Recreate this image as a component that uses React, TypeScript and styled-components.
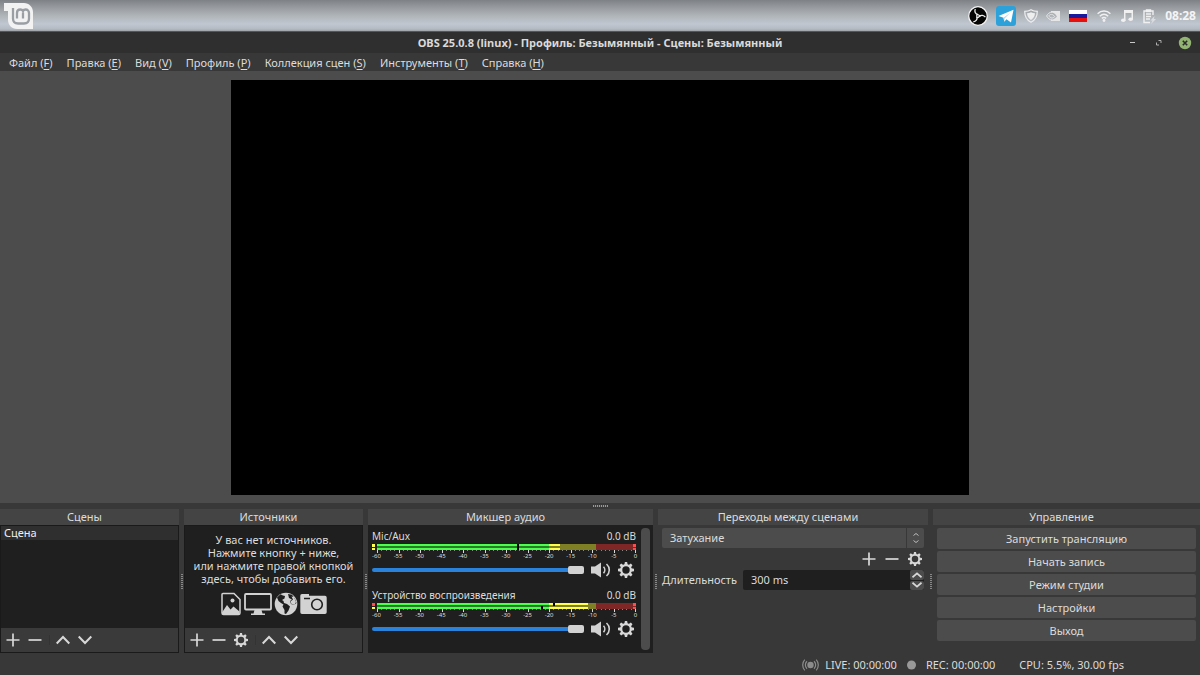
import React from "react";
import styled, { createGlobalStyle } from "styled-components";

const GlobalStyle = createGlobalStyle`
  * { box-sizing: border-box; }
  body { margin: 0; background: #383838; }
  body, button, input, select {
    font-family: "Noto Sans", sans-serif;
    font-size: 11px;
    line-height: 16px;
    color: #dcdcdc;
  }
  button, input, select { margin: 0; padding: 0; border: 0; background: none; }
`;

const Desktop = styled.div`
  display: flex;
  flex-direction: column;
  height: 100vh;
  min-height: 420px;
`;

const Panel = styled.header`
  display: flex;
  align-items: center;
  justify-content: space-between;
  flex: none;
  height: 32px;
  padding: 0 4px;
  background: linear-gradient(#7e8286 0, #999da1 8px, #b0b5ba 16px, #c1c7d0 24px, #b4bac2 29px, #9ea3a9 31px, #55585b 31px);
`;

const PanelButton = styled.button`
  display: flex;
`;

const Tray = styled.div`
  display: flex;
  align-items: center;
  gap: 9px;
`;

const TrayGroup = styled.div<{ $gap: number }>`
  display: flex;
  align-items: center;
  gap: ${(p) => p.$gap}px;
`;

const TrayIcon = styled.svg<{ $w: number; $h: number }>`
  display: block;
  flex: none;
  width: ${(p) => p.$w}px;
  height: ${(p) => p.$h}px;
`;

const Clock = styled.time`
  font-size: 12px;
  font-weight: 700;
  color: #f4f4f4;
`;

const TitleBar = styled.div`
  display: grid;
  grid-template-columns: 1fr auto 1fr;
  align-items: center;
  flex: none;
  height: 21px;
  padding: 0 8px;
  background: #2f2f2f;
`;

const Title = styled.h1`
  grid-column: 2;
  margin: 0;
  font-size: 11px;
  line-height: 16px;
  font-weight: 700;
  color: #dadada;
`;

const WindowButtons = styled.div`
  display: flex;
  justify-content: flex-end;
  gap: 12px;
`;

const WindowButton = styled.button`
  display: flex;
  width: 14px;
  height: 14px;
`;

const MenuBar = styled.nav`
  display: flex;
  align-items: center;
  gap: 14px;
  flex: none;
  height: 18px;
  padding: 2px 9px 0;
  background: #383838;
`;

const MenuItem = styled.button`
  white-space: nowrap;
  & u { text-underline-offset: 2px; }
`;

const Preview = styled.main`
  display: flex;
  justify-content: center;
  flex: 1;
  min-height: 0;
  padding: 9px 0 8px;
  background: #4c4c4c;
`;

const Canvas = styled.div`
  height: 100%;
  aspect-ratio: 16 / 9;
  background: #000;
`;

const HorizontalSplitter = styled.div`
  display: flex;
  align-items: center;
  justify-content: center;
  flex: none;
  height: 6px;
  &::after {
    content: "";
    width: 15px;
    height: 2px;
    background: repeating-linear-gradient(90deg, #999 0 1px, #444 1px 2px);
  }
`;

const VerticalSplitter = styled.div`
  display: flex;
  align-items: center;
  justify-content: center;
  flex: none;
  width: 5px;
  &::after {
    content: "";
    width: 2px;
    height: 15px;
    background: repeating-linear-gradient(#888 0 1px, #3c3c3c 1px 2px);
  }
`;

const Docks = styled.div`
  display: flex;
  flex: none;
`;

const Dock = styled.section<{ $grow: number }>`
  display: flex;
  flex-direction: column;
  flex: ${(p) => p.$grow} 1 0;
  min-width: 0;
`;

const DockTitle = styled.h2`
  flex: none;
  margin: 0;
  padding-right: 10px;
  font-size: 11px;
  font-weight: 400;
  line-height: 16px;
  text-align: center;
  background: #444;
`;

const ListBox = styled.div`
  display: flex;
  flex-direction: column;
  flex: 1;
  border: 1px solid #1a1a1a;
  background: #1f1f1f;
`;

const ListItem = styled.div`
  padding: 0 3px;
  line-height: 14px;
  color: #f0f0f0;
  background: #2f2f2f;
`;

const Toolbar = styled.div`
  display: flex;
  align-items: center;
  gap: 8px;
  height: 24px;
  margin-top: auto;
  padding: 0 5px;
  background: #3a3a3a;
`;

const ToolButton = styled.button`
  display: flex;
  flex: none;
`;

const Separator = styled.span`
  width: 1px;
  height: 10px;
  margin: 0 -2px 0 -1px;
  background: #333;
`;

const EmptyHint = styled.p`
  margin: 7px 0;
  line-height: 13px;
  text-align: center;
  white-space: nowrap;
`;

const SourceIcons = styled.div`
  display: flex;
  align-items: center;
  justify-content: center;
  gap: 2px;
`;

const Mixer = styled.div`
  display: flex;
  gap: 5px;
  flex: 1;
  min-height: 128px;
  padding: 3px 3px 3px 4px;
  background: #1f1f1f;
`;

const Channels = styled.div`
  display: flex;
  flex-direction: column;
  gap: 7px;
  flex: 1;
  min-width: 0;
`;

const ScrollThumb = styled.div`
  width: 9px;
  border-radius: 4px;
  background: #4c4c4c;
`;

const ChannelHead = styled.div`
  display: flex;
  justify-content: space-between;
  font-size: 10px;
`;

const MeterDrawing = styled.svg`
  display: block;
  width: 100%;
  height: 9px;
`;

const Scale = styled.div`
  display: flex;
  justify-content: space-between;
  margin-right: -4px;
  height: 7px;
  font-size: 6px;
  line-height: 6px;
  & span { width: 9px; text-align: center; white-space: nowrap; }
`;

const ChannelControls = styled.div`
  display: flex;
  align-items: center;
  gap: 7px;
  height: 20px;
  padding-right: 2px;
`;

const Fader = styled.input`
  appearance: none;
  flex: 1;
  min-width: 0;
  height: 8px;
  &::-webkit-slider-runnable-track {
    height: 4px;
    border-radius: 2px;
    background: #2a82da;
  }
  &::-webkit-slider-thumb {
    appearance: none;
    width: 16px;
    height: 8px;
    margin-top: -2px;
    border-radius: 2px;
    background: #d2d2d2;
  }
`;

const Transitions = styled.div`
  display: flex;
  flex-direction: column;
  padding: 3px 4px;
`;

const SelectFrame = styled.div`
  display: grid;
  grid-template-columns: 1fr 18px;
  align-items: center;
  height: 20px;
  border-radius: 2px;
  background: #4c4c4c;
`;

const TransitionSelect = styled.select`
  grid-area: 1 / 1 / 2 / 3;
  appearance: none;
  width: 100%;
  height: 20px;
  padding: 0 8px;
`;

const SelectArrows = styled.span`
  grid-area: 1 / 2;
  display: flex;
  align-items: center;
  justify-content: center;
  height: 20px;
  border-left: 1px solid #383838;
  pointer-events: none;
`;

const TransitionTools = styled.div`
  display: flex;
  align-items: center;
  justify-content: flex-end;
  gap: 9px;
  height: 22px;
  padding: 0 2px;
`;

const DurationRow = styled.div`
  display: flex;
  align-items: center;
  gap: 6px;
`;

const SpinBox = styled.div`
  display: flex;
  flex: 1;
  min-width: 0;
  height: 20px;
  border-radius: 2px;
  overflow: hidden;
  background: #1f1f1f;
`;

const DurationInput = styled.input`
  flex: 1;
  min-width: 0;
  padding: 0 8px;
`;

const SpinButtons = styled.div`
  display: flex;
  flex-direction: column;
  gap: 1px;
  width: 14px;
`;

const SpinButton = styled.button`
  display: flex;
  align-items: center;
  justify-content: center;
  flex: 1;
  border-radius: 2px;
  background: #4c4c4c;
`;

const Controls = styled.div`
  display: flex;
  flex-direction: column;
  gap: 2px;
  padding: 3px 4px;
`;

const ControlButton = styled.button`
  height: 21px;
  border-radius: 2px;
  background: #4c4c4c;
`;

const StatusBar = styled.footer`
  display: flex;
  align-items: center;
  justify-content: flex-end;
  gap: 24px;
  flex: none;
  height: 22px;
  padding: 2px 76px 0 0;
`;

const StatusGroup = styled.div`
  display: flex;
  gap: 10px;
`;

const Status = styled.span<{ $gap: number }>`
  display: flex;
  align-items: center;
  gap: ${(p) => p.$gap}px;
  white-space: nowrap;
`;

const line = { fill: "none", stroke: "#d8d8d8", strokeWidth: 1.7 };

const Plus = () => (
  <svg width="14" height="14" viewBox="0 0 14 14" {...line}><path d="M7 .5v13M.5 7h13" /></svg>
);
const Minus = () => (
  <svg width="14" height="14" viewBox="0 0 14 14" {...line}><path d="M.5 7h13" /></svg>
);
const Up = () => (
  <svg width="14" height="14" viewBox="0 0 14 14" {...line} strokeWidth={2}><path d="M.7 10.500 7 4l6.300 6.500" /></svg>
);
const Down = () => (
  <svg width="14" height="14" viewBox="0 0 14 14" {...line} strokeWidth={2}><path d="M.7 3.500 7 10l6.300-6.500" /></svg>
);
const Gear = ({ size = 14 }: { size?: number }) => (
  <svg width={size} height={size} viewBox="0 0 14 14" fill="none" stroke="#d8d8d8">
    <circle cx="7" cy="7" r="4.200" strokeWidth="1.900" />
    {[0, 45, 90, 135, 180, 225, 270, 315].map((a) => (
      <path key={a} d="M5.500 2.600 6 0h2l.5 2.600z" fill="#d8d8d8" stroke="none" transform={`rotate(${a} 7 7)`} />
    ))}
  </svg>
);
const Speaker = () => (
  <svg width="20" height="16" viewBox="0 0 20 16" fill="none" stroke="#d2d2d2" strokeWidth="1.600">
    <path d="M0 4.500h4l6-4v15l-6-4H0z" fill="#d2d2d2" stroke="none" />
    <path d="M12.500 4.800c1.700 1.800 1.700 4.600 0 6.400M15.500 2c3.700 3.300 3.700 8.700 0 12" />
  </svg>
);

type MeterProps = { level: number; peaks: [number, number]; clip: [string, string] };

const Meter = ({ level, peaks, clip }: MeterProps) => (
  <MeterDrawing viewBox="0 0 264 9" preserveAspectRatio="none" shapeRendering="crispEdges" aria-hidden="true">
    <rect x="5" width="172" height="6" fill="#267f26" />
    <rect x="177" width="47" height="6" fill="#7f7f26" />
    <rect x="224" width="40" height="6" fill="#7f2626" />
    {[0, 4].map((y, i) => (
      <g key={y}>
        <rect y={y} width="3" height={3 - i} fill={clip[i]} />
        <rect x="5" y={y} width="172" height="2" fill="#4cff4c" />
        <rect x="177" y={y} width={level - 177} height="2" fill="#ffff4c" />
        <rect x={peaks[i]} y={i * 3} width="2" height="3" fill="#000" />
        <rect x="261" y={y} width="3" height={3 - i} fill="#ff4c4c" />
      </g>
    ))}
    {Array.from({ length: 61 }, (_, i) => (
      <rect key={i} x={Math.round(5 + i * 4.3)} y="6" width="1" height={i % 5 ? 1 : 3} fill={i % 5 ? "#888" : "#d8d8d8"} />
    ))}
  </MeterDrawing>
);

const Channel = ({ name, ...meter }: MeterProps & { name: string }) => (
  <div>
    <ChannelHead><span>{name}</span><span>0.0 dB</span></ChannelHead>
    <Meter {...meter} />
    <Scale>
      {[-60, -55, -50, -45, -40, -35, -30, -25, -20, -15, -10, -5, 0].map((v) => <span key={v}>{v}</span>)}
    </Scale>
    <ChannelControls>
      <Fader type="range" min="0" max="100" defaultValue="100" aria-label={name} />
      <ToolButton aria-label="Без звука"><Speaker /></ToolButton>
      <ToolButton aria-label="Параметры"><Gear size={16} /></ToolButton>
    </ChannelControls>
  </div>
);

const menus = [["Файл", "F"], ["Правка", "E"], ["Вид", "V"], ["Профиль", "P"], ["Коллекция сцен", "S"], ["Инструменты", "T"], ["Справка", "H"]];
const controls = ["Запустить трансляцию", "Начать запись", "Режим студии", "Настройки", "Выход"];

export default function App() {
  return (
    <Desktop>
      <GlobalStyle />
      <Panel>
        <PanelButton aria-label="Меню">
          <svg width="29" height="26" viewBox="0 0 29 26">
            <path d="M0 0h20c5 0 9 4 9 9v17H13c-5 0-9-4-9-9V8H0z" fill="#f2f2f2" />
            <path d="M9 5v10.500c0 3 2 5 5 5h6c3 0 5-2 5-5V10c0-2-1.500-3.500-3.300-3.500-1.400 0-2.400.8-2.700 1.500-.5-.9-1.500-1.500-2.700-1.500-1.900 0-3.300 1.500-3.300 3.500v5.500M19 9.500v6" fill="none" stroke="#9a9fa5" strokeWidth="2.300" />
          </svg>
        </PanelButton>
        <Tray>
          <TrayGroup $gap={8}>
            <TrayIcon $w={20} $h={20} viewBox="0 0 20 20">
              <circle cx="10" cy="10" r="9.300" fill="#050505" stroke="#f4f4f4" strokeWidth="1.300" />
              {[0, 120, 240].map((a) => (
                <path key={a} d="M7.300 3C6.300 5.500 7.200 8 9.800 8.600c1.200.3 2 .9 2.300 2" fill="none" stroke="#eee" strokeWidth="1.300" transform={`rotate(${a} 10 10)`} />
              ))}
            </TrayIcon>
            <TrayIcon $w={20} $h={20} viewBox="0 0 20 20">
              <rect width="20" height="20" rx="3" fill="#2da1da" />
              <path d="M2.500 10 17.500 3.800 15 16.500l-4.500-3.200-2.200 2.500-.8-4z" fill="#fff" />
              <path d="M7.500 11.800 14.500 6.500 8.600 12.600l-.3 3.200z" fill="#b4d8ec" />
            </TrayIcon>
            <TrayIcon $w={14} $h={14} viewBox="0 0 14 14">
              <path d="M7 .7c2 1.200 4 1.600 6.300 1.600 0 5-1.600 8.700-6.300 11C2.300 11 .7 7.300.7 2.300 3 2.300 5 1.900 7 .7z" fill="none" stroke="#eee" strokeWidth="1.200" />
              <path d="M7 3.200c1.300.7 2.500 1 4 1.100-.2 3-1.300 5.100-4 6.600-2.700-1.500-3.800-3.600-4-6.600 1.500-.1 2.700-.4 4-1.100z" fill="#eee" />
            </TrayIcon>
            <TrayIcon $w={14} $h={10} viewBox="0 0 14 10">
              <path d="M5 0h9v10H5V8.800c2.500 0 4.500-1.500 6-3.300C9.500 3 7.500 1.600 5 1.600z" fill="#e6e6e6" />
              <path d="M6 1C3.500 1.200 1.500 3 .6 5 2 7.300 3.700 9 6 9M8.700 5.500C7.500 7 5.500 7.500 4.200 6.500 3.200 5.600 2.900 5 2.900 4.700 4 3 6.500 2.600 8.700 5.500z" fill="none" stroke="#e6e6e6" />
            </TrayIcon>
          </TrayGroup>
          <TrayGroup $gap={10}>
            <TrayIcon $w={18} $h={12} viewBox="0 0 18 12">
              <path d="M0 0h18v4H0z" fill="#fff" />
              <path d="M0 4h18v4H0z" fill="#1a1a9c" />
              <path d="M0 8h18v4H0z" fill="#e8100e" />
            </TrayIcon>
            <TrayIcon $w={14} $h={12} viewBox="0 0 14 12">
              <g fill="none" stroke="#f0f0f0" strokeWidth="1.500">
                <path d="M.6 3.700c3.700-3.500 9.100-3.500 12.800 0M2.800 6.200c2.500-2.300 5.900-2.300 8.400 0" />
                <path d="M4.800 8.400c1.400-1.200 3-1.200 4.400 0" />
              </g>
              <circle cx="7" cy="10.500" r="1.400" fill="#f0f0f0" />
            </TrayIcon>
            <TrayIcon $w={12} $h={12} viewBox="0 0 12 12" fill="#f0f0f0">
              <path d="M3 0h9v9h-1.500V3h-6v7H3z" />
              <ellipse cx="2.300" cy="10.300" rx="2.300" ry="1.700" />
              <ellipse cx="9.700" cy="9.300" rx="2.300" ry="1.700" />
            </TrayIcon>
            <TrayIcon $w={13} $h={15} viewBox="0 0 13 15">
              <path d="M3 2H1v11.500h6M8 2h2v4M3.500 1h4v1.500h-4zM3 5h5M3 7.500h5M3 10h4" fill="none" stroke="#f0f0f0" strokeWidth="1.400" />
              <path d="m11.500 7-4 4.500h2L8 15l5-5h-2.200z" fill="#dcdfe2" />
            </TrayIcon>
          </TrayGroup>
          <Clock>08:28</Clock>
        </Tray>
      </Panel>

      <TitleBar>
        <Title>OBS 25.0.8 (linux) - Профиль: Безымянный - Сцены: Безымянный</Title>
        <WindowButtons>
          <WindowButton aria-label="Свернуть">
            <svg width="14" height="14"><path d="M4 6.500h5" stroke="#c8c8c8" /></svg>
          </WindowButton>
          <WindowButton aria-label="Развернуть">
            <svg width="14" height="14" fill="none" stroke="#b0b0b0"><path d="M6.500 4.500h2.500V7M4.500 6.500V9H7" /></svg>
          </WindowButton>
          <WindowButton aria-label="Закрыть">
            <svg width="14" height="14"><circle cx="7" cy="7" r="6.200" fill="#92b372" /><path d="m4.800 4.800 4.400 4.400m0-4.400L4.800 9.200" stroke="#2b2b2b" strokeWidth="1.600" /></svg>
          </WindowButton>
        </WindowButtons>
      </TitleBar>

      <MenuBar>
        {menus.map(([name, key]) => <MenuItem key={key}>{name} (<u>{key}</u>)</MenuItem>)}
      </MenuBar>

      <Preview><Canvas /></Preview>
      <HorizontalSplitter />

      <Docks>
        <Dock $grow={179}>
          <DockTitle>Сцены</DockTitle>
          <ListBox>
            <ListItem>Сцена</ListItem>
            <Toolbar>
              <ToolButton aria-label="Добавить сцену"><Plus /></ToolButton>
              <ToolButton aria-label="Удалить сцену"><Minus /></ToolButton>
              <Separator />
              <ToolButton aria-label="Вверх"><Up /></ToolButton>
              <ToolButton aria-label="Вниз"><Down /></ToolButton>
            </Toolbar>
          </ListBox>
        </Dock>
        <VerticalSplitter />
        <Dock $grow={179}>
          <DockTitle>Источники</DockTitle>
          <ListBox>
            <EmptyHint>
              У вас нет источников.<br />Нажмите кнопку + ниже,<br />или нажмите правой кнопкой<br />здесь, чтобы добавить его.
            </EmptyHint>
            <SourceIcons>
              <svg width="22" height="24" viewBox="0 0 22 24">
                <path d="M3 1.500h11l6 6V21a1.500 1.500 0 0 1-1.500 1.500h-15A1.500 1.500 0 0 1 2 21V2.500a1 1 0 0 1 1-1z" fill="none" stroke="#d2d2d2" strokeWidth="1.500" />
                <circle cx="12.500" cy="8.500" r="2" fill="#d2d2d2" />
                <path d="M2 20.500 7 13l3.500 4.500 3-3 6 5V22H2z" fill="#d2d2d2" />
              </svg>
              <svg width="28" height="24" viewBox="0 0 28 24">
                <rect x="1" y="2" width="26" height="15.500" rx="1" fill="none" stroke="#d2d2d2" strokeWidth="1.800" />
                <path d="M10.500 18h7l1 3.500h2.500V23H7v-1.500h2.500z" fill="#d2d2d2" />
              </svg>
              <svg width="24" height="24" viewBox="0 0 24 24">
                <circle cx="12" cy="12" r="11.300" fill="#d2d2d2" />
                <path d="M3 5.500 6.500 2.200 9 3.500l2 .5-.5 2.500L8 8l1.500 1 .5 2 3 1 3 2.500-1.500 4-2.500 3.500-1.500-.5V18l-2-3.500 1-2L7 11 4.500 9z" fill="#1f1f1f" />
                <path d="m14 2 4 .8 3 4.200 1.500 4-2.500 2-3-1-1-3 2-1.500-3-1.500z" fill="#1f1f1f" />
                <path d="m17.500 4.500 1.500 3-2.500 2 1 2.500 3 1 1.500-3-2-5z" fill="#d2d2d2" />
              </svg>
              <svg width="27" height="22" viewBox="0 0 27 22">
                <path d="M2 1h7v1.800h16A1.700 1.700 0 0 1 26.700 4.500v14.700a1.700 1.700 0 0 1-1.700 1.700H2A1.700 1.700 0 0 1 .3 19.200V2.800A1.700 1.700 0 0 1 2 1z" fill="#d2d2d2" />
                <circle cx="17" cy="11.500" r="5.300" fill="none" stroke="#1f1f1f" strokeWidth="1.600" />
                <path d="M4 5.500h6" stroke="#1f1f1f" strokeWidth="1.500" />
              </svg>
            </SourceIcons>
            <Toolbar>
              <ToolButton aria-label="Добавить источник"><Plus /></ToolButton>
              <ToolButton aria-label="Удалить источник"><Minus /></ToolButton>
              <ToolButton aria-label="Свойства источника"><Gear /></ToolButton>
              <Separator />
              <ToolButton aria-label="Вверх"><Up /></ToolButton>
              <ToolButton aria-label="Вниз"><Down /></ToolButton>
            </Toolbar>
          </ListBox>
        </Dock>
        <VerticalSplitter />
        <Dock $grow={285}>
          <DockTitle>Микшер аудио</DockTitle>
          <Mixer>
            <Channels>
              <Channel name="Mic/Aux" level={188} peaks={[145, 145]} clip={["#ffff4c", "#ffff4c"]} />
              <Channel name="Устройство воспроизведения" level={216} peaks={[181, 169]} clip={["#ff4c4c", "#ffff4c"]} />
            </Channels>
            <ScrollThumb />
          </Mixer>
        </Dock>
        <VerticalSplitter />
        <Dock $grow={270}>
          <DockTitle>Переходы между сценами</DockTitle>
          <Transitions>
            <SelectFrame>
              <TransitionSelect aria-label="Переход"><option>Затухание</option></TransitionSelect>
              <SelectArrows>
                <svg width="8" height="12" viewBox="0 0 8 12" fill="none" stroke="#bdbdbd"><path d="m1.500 3.500 2.500-2 2.500 2M1.500 8.500l2.500 2 2.500-2" /></svg>
              </SelectArrows>
            </SelectFrame>
            <TransitionTools>
              <ToolButton aria-label="Добавить переход"><Plus /></ToolButton>
              <ToolButton aria-label="Удалить переход"><Minus /></ToolButton>
              <ToolButton aria-label="Свойства перехода"><Gear /></ToolButton>
            </TransitionTools>
            <DurationRow>
              <label htmlFor="duration">Длительность</label>
              <SpinBox>
                <DurationInput id="duration" defaultValue="300 ms" />
                <SpinButtons>
                  <SpinButton aria-label="Больше"><svg width="10" height="6" {...line}><path d="m.5 5.300 4.500-4 4.500 4" /></svg></SpinButton>
                  <SpinButton aria-label="Меньше"><svg width="10" height="6" {...line}><path d="m.5.7 4.500 4 4.500-4" /></svg></SpinButton>
                </SpinButtons>
              </SpinBox>
            </DurationRow>
          </Transitions>
        </Dock>
        <VerticalSplitter />
        <Dock $grow={267}>
          <DockTitle>Управление</DockTitle>
          <Controls>
            {controls.map((label) => <ControlButton key={label}>{label}</ControlButton>)}
          </Controls>
        </Dock>
      </Docks>

      <StatusBar>
        <StatusGroup>
          <Status $gap={6}>
            <svg width="17" height="14" viewBox="0 0 17 14" fill="none" stroke="#8c8c8c" strokeWidth="1.200">
              <circle cx="8.500" cy="7" r="3.200" fill="#8c8c8c" stroke="none" />
              <path d="M5 3.300a5 5 0 0 0 0 7.400M12 3.300a5 5 0 0 1 0 7.400M2.800 1.600a8 8 0 0 0 0 10.800M14.200 1.600a8 8 0 0 1 0 10.800" />
            </svg>
            LIVE: 00:00:00
          </Status>
          <Status $gap={10}>
            <svg width="9" height="10" viewBox="0 0 9 10"><circle cx="4.500" cy="5" r="4.500" fill="#999" /></svg>
            REC: 00:00:00
          </Status>
        </StatusGroup>
        <span>CPU: 5.5%, 30.00 fps</span>
      </StatusBar>
    </Desktop>
  );
}
